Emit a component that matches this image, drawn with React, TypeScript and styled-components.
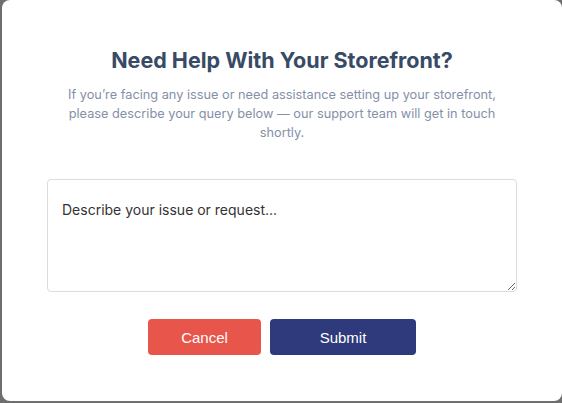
import React from 'react';
import styled, { createGlobalStyle } from 'styled-components';

const GlobalStyle = createGlobalStyle`
  html, body {
    margin: 0;
    padding: 0;
    background: #6e6e6e;
    font-family: Inter, 'Liberation Sans', sans-serif;
  }
  * {
    box-sizing: border-box;
  }
`;

const Backdrop = styled.div`
  width: 562px;
  height: 403px;
  padding: 0 0 2px 2px;
  background: #6e6e6e;
  display: flex;
`;

const Modal = styled.div`
  flex: 1;
  background: #ffffff;
  border-radius: 8px;
  padding: 47px 45px 46px;
  display: flex;
  flex-direction: column;
  align-items: stretch;
`;

const Title = styled.h2`
  margin: 0;
  text-align: center;
  color: #374a66;
  font: 700 21.5px/26px Inter, 'Liberation Sans', sans-serif;
`;

const Subtitle = styled.p`
  margin: 12px auto 0;
  max-width: 440px;
  text-align: center;
  color: #8590a8;
  font: 400 12.75px/19px Inter, 'Liberation Sans', sans-serif;
`;

const Message = styled.textarea`
  margin-top: 37px;
  height: 113px;
  padding: 20px 14px;
  border: 1px solid #dcdcdc;
  border-radius: 4px;
  resize: vertical;
  font: 400 14px/20px Inter, 'Liberation Sans', sans-serif;
  color: #333333;
  outline: none;
  &::placeholder {
    color: #333333;
    opacity: 1;
  }
`;

const Actions = styled.div`
  margin-top: 27px;
  display: flex;
  justify-content: center;
  gap: 9px;
`;

const Button = styled.button<{ $variant: 'cancel' | 'submit' }>`
  height: 36px;
  width: ${(p) => (p.$variant === 'cancel' ? '113px' : '146px')};
  border: 0;
  border-radius: 4px;
  background: ${(p) => (p.$variant === 'cancel' ? '#e8554a' : '#2e3a7c')};
  color: #ffffff;
  font: 400 15px 'Liberation Sans', Arial, sans-serif;
  cursor: pointer;
`;

const App: React.FC = () => {
  return (
    <>
      <GlobalStyle />
      <Backdrop>
        <Modal>
          <Title>Need Help With Your Storefront?</Title>
          <Subtitle>
            If you’re facing any issue or need assistance setting up your
            storefront, please describe your query below — our support team
            will get in touch shortly.
          </Subtitle>
          <Message placeholder="Describe your issue or request..." />
          <Actions>
            <Button $variant="cancel">Cancel</Button>
            <Button $variant="submit">Submit</Button>
          </Actions>
        </Modal>
      </Backdrop>
    </>
  );
};

export default App;
